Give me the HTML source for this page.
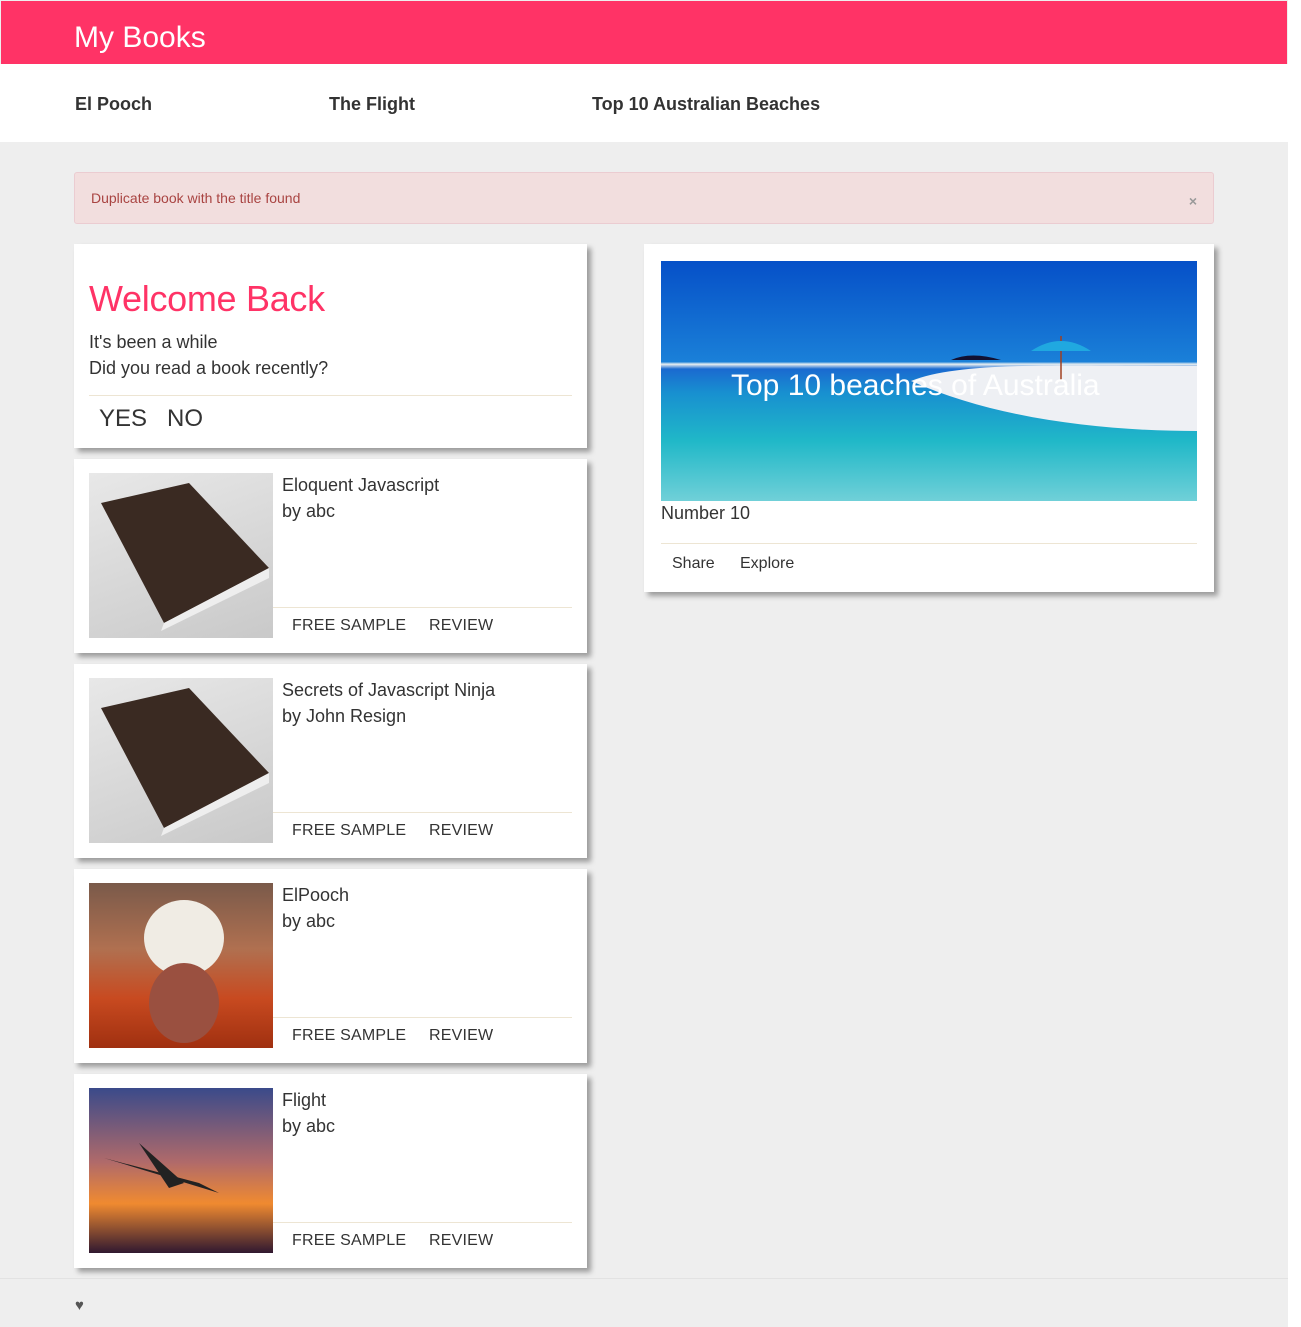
<!DOCTYPE html>
<html><head><style>
*{margin:0;padding:0;box-sizing:border-box}
body{width:1301px;height:1327px;background:#fff;font-family:"Liberation Sans",sans-serif;position:relative;overflow:hidden;color:#333}
.page{position:absolute;left:0;top:0;width:1288px;height:1327px;background:#eee}
.hdr{position:absolute;left:1px;top:1px;width:1286px;height:63px;background:#ff3366;color:#fff;font-size:30px;padding:20px 0 0 73px}
.nav{position:absolute;left:0;top:64px;width:1288px;height:78px;background:#fff;font-weight:bold;font-size:18px;color:#333}
.nav span{position:absolute;top:30px}
.alert{position:absolute;left:74px;top:172px;width:1140px;height:52px;background:#f2dede;border:1px solid #ebccd1;border-radius:3px;color:#a94442;font-size:14px;padding:17px 0 0 16px}
.alert b{position:absolute;right:16px;top:20px;color:#999;font-size:14px}
.card{position:absolute;background:#fff;box-shadow:4px 4px 5px rgba(0,0,0,.35)}
.book{left:74px;width:513px;height:194px}
.book .img{position:absolute;left:15px;top:14px;width:184px;height:165px}
.book .t{position:absolute;left:208px;top:13px;font-size:18px;line-height:26px;color:#333}
.book .hr{position:absolute;left:199px;top:148px;width:299px;border-top:1px solid #ede5d3}
.book .b{position:absolute;top:158px;font-size:16px;letter-spacing:.2px;color:#333}
.booki{background:linear-gradient(160deg,#e8e8e8,#c9c9c9)}
</style></head><body><div class="page">
<div class="hdr">My Books</div>
<div class="nav"><span style="left:75px">El Pooch</span><span style="left:329px">The Flight</span><span style="left:592px">Top 10 Australian Beaches</span></div>
<div class="alert">Duplicate book with the title found<b>×</b></div>

<div class="card" style="left:74px;top:244px;width:513px;height:204px">
<div style="position:absolute;left:15px;top:34px;font-size:36px;color:#ff3366;letter-spacing:-.3px">Welcome Back</div>
<div style="position:absolute;left:15px;top:85px;font-size:18px;line-height:26px">It's been a while<br>Did you read a book recently?</div>
<div style="position:absolute;left:15px;top:151px;width:483px;border-top:1px solid #ede5d3"></div>
<div style="position:absolute;left:25px;top:161px;font-size:24px">YES&nbsp;&nbsp;&nbsp;NO</div>
</div>

<div class="card book" style="top:459px"><div class="img booki"><svg width="184" height="165"><polygon points="12,30 100,10 180,95 75,150" fill="#3a2a22"/><polygon points="75,150 180,95 180,105 72,158" fill="#eee"/></svg></div><div class="t">Eloquent Javascript<br>by abc</div><div class="hr"></div><div class="b" style="left:218px">FREE SAMPLE</div><div class="b" style="left:355px">REVIEW</div></div>
<div class="card book" style="top:664px"><div class="img booki"><svg width="184" height="165"><polygon points="12,30 100,10 180,95 75,150" fill="#3a2a22"/><polygon points="75,150 180,95 180,105 72,158" fill="#eee"/></svg></div><div class="t">Secrets of Javascript Ninja<br>by John Resign</div><div class="hr"></div><div class="b" style="left:218px">FREE SAMPLE</div><div class="b" style="left:355px">REVIEW</div></div>
<div class="card book" style="top:869px"><div class="img" style="background:linear-gradient(180deg,#7a5a4a 0%,#b07050 40%,#c84a20 70%,#a03010 100%)"><svg width="184" height="165"><ellipse cx="95" cy="55" rx="40" ry="38" fill="#f0ece4"/><ellipse cx="95" cy="120" rx="35" ry="40" fill="#9a5040"/></svg></div><div class="t">ElPooch<br>by abc</div><div class="hr"></div><div class="b" style="left:218px">FREE SAMPLE</div><div class="b" style="left:355px">REVIEW</div></div>
<div class="card book" style="top:1074px"><div class="img" style="background:linear-gradient(180deg,#3a4a8a 0%,#b06a6a 45%,#f08a30 70%,#301830 100%)"><svg width="184" height="165"><polygon points="15,70 130,105 110,95" fill="#222"/><polygon points="50,55 95,95 80,100" fill="#222"/></svg></div><div class="t">Flight<br>by abc</div><div class="hr"></div><div class="b" style="left:218px">FREE SAMPLE</div><div class="b" style="left:355px">REVIEW</div></div>

<div class="card" style="left:644px;top:244px;width:570px;height:348px">
<div style="position:absolute;left:17px;top:17px;width:536px;height:240px;overflow:hidden;background:linear-gradient(180deg,#0650c8 0%,#1a80d8 42%,#e8eef0 43%,#1a6ad0 45%,#1890d0 55%,#20b8c8 75%,#70d0d8 100%)">
<svg width="536" height="240" style="position:absolute;left:0;top:0"><path d="M250,120 C300,100 400,105 536,105 L536,170 C450,170 340,160 250,120Z" fill="#eef0f4"/><line x1="400" y1="75" x2="400" y2="120" stroke="#a04020" stroke-width="1.5"/><path d="M370,90 Q400,70 430,90Z" fill="#20a8e0"/><path d="M290,99 Q310,90 340,99Z" fill="#113"/></svg>
<div style="position:absolute;left:70px;top:108px;color:#fff;font-size:30px">Top 10 beaches of Australia</div></div>
<div style="position:absolute;left:17px;top:259px;font-size:18px">Number 10</div>
<div style="position:absolute;left:17px;top:299px;width:536px;border-top:1px solid #ede5d3"></div>
<div style="position:absolute;left:28px;top:311px;font-size:16px">Share</div>
<div style="position:absolute;left:96px;top:311px;font-size:16px">Explore</div>
</div>
<div style="position:absolute;left:0;top:1278px;width:1288px;border-top:1px solid #e2e2e2"></div>
<div style="position:absolute;left:75px;top:1297px;color:#555;font-size:15px">♥</div>
</div></body></html>
